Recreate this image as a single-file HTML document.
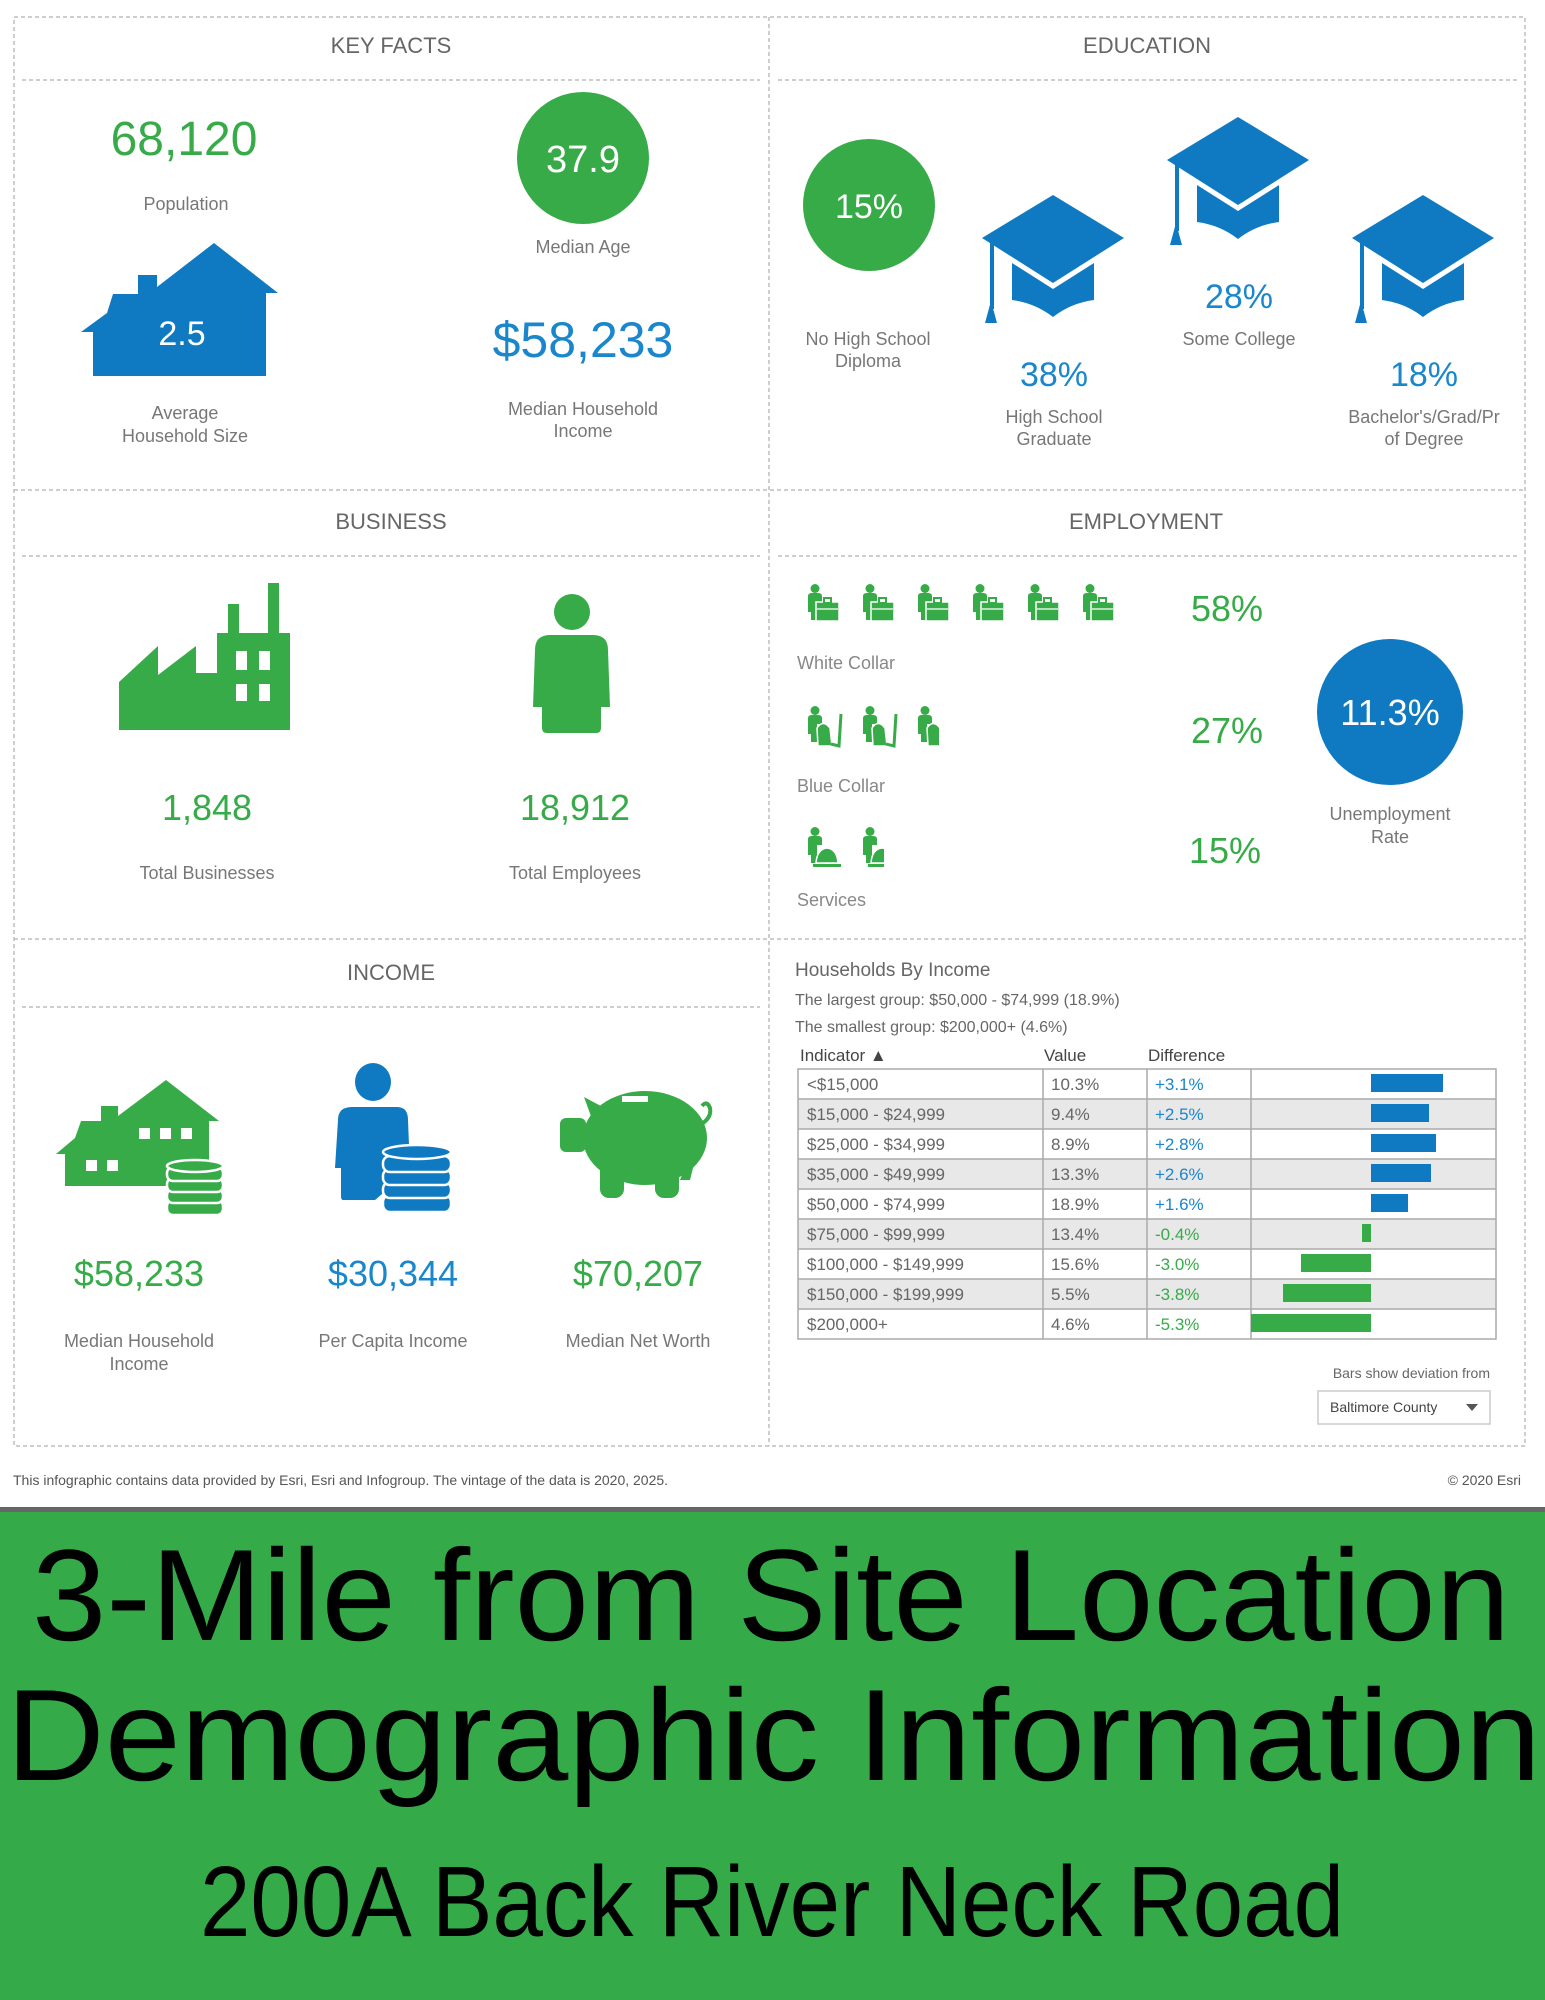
<!DOCTYPE html>
<html><head><meta charset="utf-8"><style>
html,body{margin:0;padding:0;background:#fff;}
svg{display:block;}
text{font-family:"Liberation Sans",sans-serif;}
</style></head><body>
<svg width="1545" height="2000" viewBox="0 0 1545 2000" xmlns="http://www.w3.org/2000/svg">
<defs>
<clipPath id="half"><rect x="0" y="0" width="24" height="50"/></clipPath>
<g id="cap">
<path d="M-71,43 L0,0 L71,43 L0,88 Z" fill="#0f7ac1"/>
<path d="M-41,68 L0,94 L41,68 L41,105 Q18,108 0,122 Q-18,108 -41,105 Z" fill="#0f7ac1"/>
<rect x="-63" y="46" width="4" height="68" fill="#0f7ac1"/>
<path d="M-62,106 L-56,128 L-68,128 Z" fill="#0f7ac1"/>
</g>
<g id="pp">
<circle cx="10" cy="4.5" r="4.5" fill="#37ab48"/>
<path d="M3,12 Q3,9 7,9 L13,9 Q17,9 17,12 L17,18 L12,18 L12,36 L6,36 L6,28 L3,28 Z" fill="#37ab48"/>
</g>
<g id="wc">
<use href="#pp"/>
<rect x="11" y="18" width="23" height="19" fill="#37ab48" stroke="#fff" stroke-width="1.5"/>
<rect x="19" y="14" width="7" height="5" fill="none" stroke="#37ab48" stroke-width="2"/>
<path d="M12,25 L33,25" stroke="#fff" stroke-width="1.2"/>
</g>
<g id="bc">
<use href="#pp"/>
<path d="M12,22 Q18,13 25,22 L27,40 L13,40 Z" fill="#37ab48" stroke="#fff" stroke-width="1.5"/>
<path d="M26,38 L34,40 L36,8" stroke="#37ab48" stroke-width="3" fill="none"/>
</g>
<g id="sv">
<use href="#pp"/>
<path d="M11,36 Q12,22 22,21 Q32,22 33,36 Z" fill="#37ab48" stroke="#fff" stroke-width="1.5"/>
<rect x="8" y="37" width="28" height="3" fill="#37ab48"/>
</g>
</defs>

<g fill="none" stroke="#bdbdbd" stroke-width="1.5" stroke-dasharray="4 3">
<rect x="14" y="17" width="1511" height="1429"/>
<line x1="769" y1="17" x2="769" y2="1446"/>
<line x1="14" y1="490" x2="1525" y2="490"/>
<line x1="14" y1="939" x2="1525" y2="939"/>
<line x1="22" y1="80" x2="760" y2="80"/>
<line x1="778" y1="80" x2="1518" y2="80"/>
<line x1="22" y1="556" x2="760" y2="556"/>
<line x1="778" y1="556" x2="1518" y2="556"/>
<line x1="22" y1="1007" x2="760" y2="1007"/>
</g>

<g fill="#666" font-size="22" text-anchor="middle">
<text x="391" y="53">KEY FACTS</text>
<text x="1147" y="53">EDUCATION</text>
<text x="391" y="529">BUSINESS</text>
<text x="1146" y="529">EMPLOYMENT</text>
<text x="391" y="980">INCOME</text>
</g>

<text x="184" y="155" font-size="48" fill="#37ab48" text-anchor="middle">68,120</text>
<text x="186" y="210" font-size="18" fill="#777" text-anchor="middle">Population</text>
<circle cx="583" cy="158" r="66" fill="#37ab48"/>
<text x="583" y="172" font-size="38" fill="#fff" text-anchor="middle">37.9</text>
<text x="583" y="253" font-size="18" fill="#777" text-anchor="middle">Median Age</text>
<path d="M93,376 L93,332 L81,332 L107,313 L113,294 L138,294 L138,275 L157,275 L157,287 L214,243 L278,293 L266,293 L266,376 Z" fill="#0f7ac1"/>
<text x="182" y="345" font-size="34" fill="#fff" text-anchor="middle">2.5</text>
<text x="185" y="419" font-size="18" fill="#777" text-anchor="middle">Average</text>
<text x="185" y="442" font-size="18" fill="#777" text-anchor="middle">Household Size</text>
<text x="583" y="357" font-size="50" fill="#1a86cc" text-anchor="middle">$58,233</text>
<text x="583" y="415" font-size="18" fill="#777" text-anchor="middle">Median Household</text>
<text x="583" y="437" font-size="18" fill="#777" text-anchor="middle">Income</text>

<circle cx="869" cy="205" r="66" fill="#37ab48"/>
<text x="869" y="218" font-size="34" fill="#fff" text-anchor="middle">15%</text>
<text x="868" y="345" font-size="18" fill="#777" text-anchor="middle">No High School</text>
<text x="868" y="367" font-size="18" fill="#777" text-anchor="middle">Diploma</text>
<use href="#cap" x="1053" y="195"/>
<use href="#cap" x="1238" y="117"/>
<use href="#cap" x="1423" y="195"/>
<text x="1054" y="386" font-size="34" fill="#1a86cc" text-anchor="middle">38%</text>
<text x="1054" y="423" font-size="18" fill="#777" text-anchor="middle">High School</text>
<text x="1054" y="445" font-size="18" fill="#777" text-anchor="middle">Graduate</text>
<text x="1239" y="308" font-size="34" fill="#1a86cc" text-anchor="middle">28%</text>
<text x="1239" y="345" font-size="18" fill="#777" text-anchor="middle">Some College</text>
<text x="1424" y="386" font-size="34" fill="#1a86cc" text-anchor="middle">18%</text>
<text x="1424" y="423" font-size="18" fill="#777" text-anchor="middle">Bachelor's/Grad/Pr</text>
<text x="1424" y="445" font-size="18" fill="#777" text-anchor="middle">of Degree</text>

<path d="M119,730 L119,682 L158,646 L158,675 L196,646 L196,673 L217,673 L217,633 L228,633 L228,604 L239,604 L239,633 L268,633 L268,583 L279,583 L279,633 L290,633 L290,730 Z" fill="#37ab48"/>
<g fill="#fff"><rect x="236" y="651" width="11" height="19"/><rect x="259" y="651" width="11" height="19"/><rect x="236" y="684" width="11" height="17"/><rect x="259" y="684" width="11" height="17"/></g>
<circle cx="572" cy="612" r="18" fill="#37ab48"/>
<path d="M535,650 Q535,635 550,635 L593,635 Q608,635 608,650 L610,707 L601,707 L601,728 Q601,733 596,733 L547,733 Q542,733 542,728 L542,707 L533,707 Z" fill="#37ab48"/>
<text x="207" y="820" font-size="36" fill="#37ab48" text-anchor="middle">1,848</text>
<text x="575" y="820" font-size="36" fill="#37ab48" text-anchor="middle">18,912</text>
<text x="207" y="879" font-size="18" fill="#777" text-anchor="middle">Total Businesses</text>
<text x="575" y="879" font-size="18" fill="#777" text-anchor="middle">Total Employees</text>

<use href="#wc" x="805" y="584"/><use href="#wc" x="860" y="584"/><use href="#wc" x="915" y="584"/>
<use href="#wc" x="970" y="584"/><use href="#wc" x="1025" y="584"/><use href="#wc" x="1080" y="584"/>
<use href="#bc" x="805" y="706"/><use href="#bc" x="860" y="706"/>
<g transform="translate(915,706)"><g clip-path="url(#half)"><use href="#bc"/></g></g>
<use href="#sv" x="805" y="827"/>
<g transform="translate(860,827)"><g clip-path="url(#half)"><use href="#sv"/></g></g>
<text x="1227" y="621" font-size="36" fill="#37ab48" text-anchor="middle">58%</text>
<text x="1227" y="743" font-size="36" fill="#37ab48" text-anchor="middle">27%</text>
<text x="1225" y="863" font-size="36" fill="#37ab48" text-anchor="middle">15%</text>
<text x="797" y="669" font-size="18" fill="#888">White Collar</text>
<text x="797" y="792" font-size="18" fill="#888">Blue Collar</text>
<text x="797" y="906" font-size="18" fill="#888">Services</text>
<circle cx="1390" cy="712" r="73" fill="#0f7ac1"/>
<text x="1390" y="725" font-size="36" fill="#fff" text-anchor="middle">11.3%</text>
<text x="1390" y="820" font-size="18" fill="#777" text-anchor="middle">Unemployment</text>
<text x="1390" y="843" font-size="18" fill="#777" text-anchor="middle">Rate</text>

<path d="M65,1186 L65,1154 L56,1154 L75,1138 L81,1121 L101,1121 L101,1106 L118,1106 L118,1116 L166,1080 L219,1121 L209,1121 L209,1186 Z" fill="#37ab48"/>
<g fill="#fff"><rect x="139" y="1128" width="11" height="11"/><rect x="160" y="1128" width="11" height="11"/><rect x="181" y="1128" width="11" height="11"/><rect x="86" y="1160" width="11" height="11"/><rect x="107" y="1160" width="11" height="11"/></g>
<g fill="#37ab48" stroke="#fff" stroke-width="2.5">
<rect x="167" y="1200" width="56" height="15" rx="6"/>
<rect x="167" y="1189" width="56" height="14" rx="6"/>
<rect x="167" y="1178" width="56" height="14" rx="6"/>
<rect x="167" y="1167" width="56" height="14" rx="6"/>
<ellipse cx="195" cy="1166" rx="28" ry="6"/>
</g>
<ellipse cx="373" cy="1082" rx="18" ry="19" fill="#0f7ac1"/>
<path d="M338,1120 Q338,1107 352,1107 L397,1107 Q408,1107 408,1120 L410,1170 L375,1200 L343,1200 Q341,1200 341,1196 L341,1168 L335,1168 Z" fill="#0f7ac1"/>
<g fill="#0f7ac1" stroke="#fff" stroke-width="2.5">
<rect x="383" y="1195" width="68" height="17" rx="7"/>
<rect x="383" y="1182" width="68" height="16" rx="7"/>
<rect x="383" y="1169" width="68" height="16" rx="7"/>
<rect x="383" y="1156" width="68" height="16" rx="7"/>
<ellipse cx="417" cy="1152" rx="34" ry="7"/>
</g>
<g fill="#37ab48">
<ellipse cx="645" cy="1138" rx="62" ry="47"/>
<rect x="560" y="1118" width="26" height="34" rx="6"/>
<path d="M584,1097 L612,1112 L596,1130 Z"/>
<rect x="600" y="1150" width="24" height="48" rx="9"/>
<rect x="655" y="1150" width="24" height="48" rx="9"/>
<path d="M680,1180 L705,1120 L690,1180 Z"/>
</g>
<path d="M700,1125 Q712,1118 710,1108 Q707,1100 702,1106" fill="none" stroke="#37ab48" stroke-width="4"/>
<rect x="622" y="1096" width="26" height="6" fill="#fff"/>
<text x="139" y="1286" font-size="36" fill="#37ab48" text-anchor="middle">$58,233</text>
<text x="393" y="1286" font-size="36" fill="#1a86cc" text-anchor="middle">$30,344</text>
<text x="638" y="1286" font-size="36" fill="#37ab48" text-anchor="middle">$70,207</text>
<text x="139" y="1347" font-size="18" fill="#777" text-anchor="middle">Median Household</text>
<text x="139" y="1370" font-size="18" fill="#777" text-anchor="middle">Income</text>
<text x="393" y="1347" font-size="18" fill="#777" text-anchor="middle">Per Capita Income</text>
<text x="638" y="1347" font-size="18" fill="#777" text-anchor="middle">Median Net Worth</text>

<text x="795" y="976" font-size="19" fill="#666">Households By Income</text>
<text x="795" y="1005" font-size="16" fill="#666">The largest group: $50,000 - $74,999 (18.9%)</text>
<text x="795" y="1032" font-size="16" fill="#666">The smallest group: $200,000+ (4.6%)</text>
<text x="800" y="1061" font-size="17" fill="#444">Indicator ▲</text>
<text x="1044" y="1061" font-size="17" fill="#444">Value</text>
<text x="1148" y="1061" font-size="17" fill="#444">Difference</text>
<g>
<rect x="798" y="1069" width="698" height="270" fill="#fff"/>
<rect x="798" y="1099" width="698" height="30" fill="#e8e8e8"/>
<rect x="798" y="1159" width="698" height="30" fill="#e8e8e8"/>
<rect x="798" y="1219" width="698" height="30" fill="#e8e8e8"/>
<rect x="798" y="1279" width="698" height="30" fill="#e8e8e8"/>
<g stroke="#aaa" stroke-width="1.5" fill="none">
<rect x="798" y="1069" width="698" height="270"/>
<line x1="798" y1="1099" x2="1496" y2="1099"/><line x1="798" y1="1129" x2="1496" y2="1129"/>
<line x1="798" y1="1159" x2="1496" y2="1159"/><line x1="798" y1="1189" x2="1496" y2="1189"/>
<line x1="798" y1="1219" x2="1496" y2="1219"/><line x1="798" y1="1249" x2="1496" y2="1249"/>
<line x1="798" y1="1279" x2="1496" y2="1279"/><line x1="798" y1="1309" x2="1496" y2="1309"/>
<line x1="1043" y1="1069" x2="1043" y2="1339"/><line x1="1147" y1="1069" x2="1147" y2="1339"/><line x1="1251" y1="1069" x2="1251" y2="1339"/>
</g>
<g font-size="17" fill="#666">
<text x="807" y="1090">&lt;$15,000</text><text x="1051" y="1090">10.3%</text>
<text x="807" y="1120">$15,000 - $24,999</text><text x="1051" y="1120">9.4%</text>
<text x="807" y="1150">$25,000 - $34,999</text><text x="1051" y="1150">8.9%</text>
<text x="807" y="1180">$35,000 - $49,999</text><text x="1051" y="1180">13.3%</text>
<text x="807" y="1210">$50,000 - $74,999</text><text x="1051" y="1210">18.9%</text>
<text x="807" y="1240">$75,000 - $99,999</text><text x="1051" y="1240">13.4%</text>
<text x="807" y="1270">$100,000 - $149,999</text><text x="1051" y="1270">15.6%</text>
<text x="807" y="1300">$150,000 - $199,999</text><text x="1051" y="1300">5.5%</text>
<text x="807" y="1330">$200,000+</text><text x="1051" y="1330">4.6%</text>
</g>
<g font-size="17">
<text x="1155" y="1090" fill="#1a86cc">+3.1%</text>
<text x="1155" y="1120" fill="#1a86cc">+2.5%</text>
<text x="1155" y="1150" fill="#1a86cc">+2.8%</text>
<text x="1155" y="1180" fill="#1a86cc">+2.6%</text>
<text x="1155" y="1210" fill="#1a86cc">+1.6%</text>
<text x="1155" y="1240" fill="#37ab48">-0.4%</text>
<text x="1155" y="1270" fill="#37ab48">-3.0%</text>
<text x="1155" y="1300" fill="#37ab48">-3.8%</text>
<text x="1155" y="1330" fill="#37ab48">-5.3%</text>
</g>
<g fill="#0f7ac1">
<rect x="1371" y="1074" width="72" height="18"/>
<rect x="1371" y="1104" width="58" height="18"/>
<rect x="1371" y="1134" width="65" height="18"/>
<rect x="1371" y="1164" width="60" height="18"/>
<rect x="1371" y="1194" width="37" height="18"/>
</g>
<g fill="#37ab48">
<rect x="1362" y="1224" width="9" height="18"/>
<rect x="1301" y="1254" width="70" height="18"/>
<rect x="1283" y="1284" width="88" height="18"/>
<rect x="1251" y="1314" width="120" height="18"/>
</g>
</g>
<text x="1490" y="1378" font-size="14" fill="#666" text-anchor="end">Bars show deviation from</text>
<rect x="1318" y="1391" width="172" height="33" fill="#fff" stroke="#ccc" stroke-width="1.5"/>
<text x="1330" y="1412" font-size="14" fill="#444">Baltimore County</text>
<path d="M1466,1404 L1478,1404 L1472,1411 Z" fill="#555"/>

<text x="13" y="1485" font-size="14" fill="#555">This infographic contains data provided by Esri, Esri and Infogroup. The vintage of the data is 2020, 2025.</text>
<text x="1521" y="1485" font-size="14" fill="#555" text-anchor="end">© 2020 Esri</text>
<rect x="0" y="1507" width="1545" height="6" fill="#666"/>
<rect x="0" y="1512" width="1545" height="488" fill="#34ab48"/>
<g fill="#000">
<text x="32" y="1640" font-size="130" textLength="1478" lengthAdjust="spacingAndGlyphs">3-Mile from Site Location</text>
<text x="6" y="1780" font-size="130" textLength="1535" lengthAdjust="spacingAndGlyphs">Demographic Information</text>
<text x="200" y="1936" font-size="100" textLength="1144" lengthAdjust="spacingAndGlyphs">200A Back River Neck Road</text>
</g>
</svg>
</body></html>
